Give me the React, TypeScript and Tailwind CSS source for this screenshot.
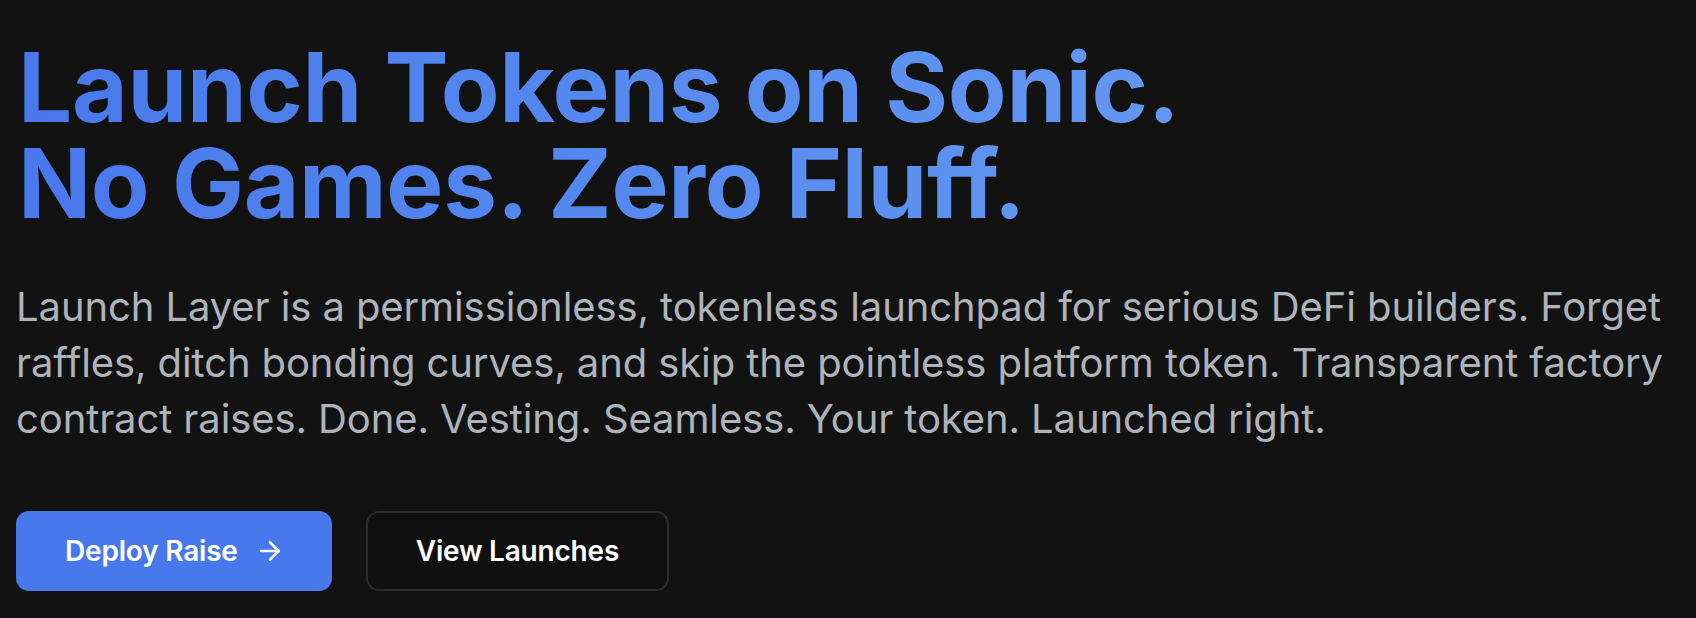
import { ArrowRight } from "lucide-react";

export default function App() {
  return (
    <div className="min-h-[618px] bg-[#121212] font-['Inter',sans-serif]">
      <section className="flex flex-col items-start px-4 pt-[39px] pb-7">
        <h1 className="ml-0.5 w-fit bg-gradient-to-r from-[#4878eb] to-[#6398f1] bg-clip-text text-[96px] font-bold leading-[96px] tracking-[-0.3px] text-transparent">
          Launch Tokens on Sonic.
          <br />
          No Games. Zero Fluff.
        </h1>
        <p className="mt-12 text-[40px] leading-[56px] tracking-[-0.1px] text-[#aeb2ba]">
          Launch Layer is a permissionless, tokenless launchpad for serious DeFi builders. Forget
          raffles, ditch bonding curves, and skip the pointless platform token. Transparent factory
          contract raises. Done. Vesting. Seamless. Your token. Launched right.
        </p>
        <div className="mt-16 flex gap-[34px]">
          <button className="flex h-20 items-center gap-[17px] rounded-[13px] bg-[#4779ec] pl-[49px] pr-[47px] text-[28px] font-semibold tracking-[-0.2px] text-white">
            Deploy Raise
            <ArrowRight size={30} strokeWidth={2} />
          </button>
          <button className="flex h-20 items-center rounded-[13px] border-2 border-[#2c2c2c] bg-[#101010] px-[48px] text-[28px] font-semibold tracking-[-0.2px] text-white">
            View Launches
          </button>
        </div>
      </section>
    </div>
  );
}
